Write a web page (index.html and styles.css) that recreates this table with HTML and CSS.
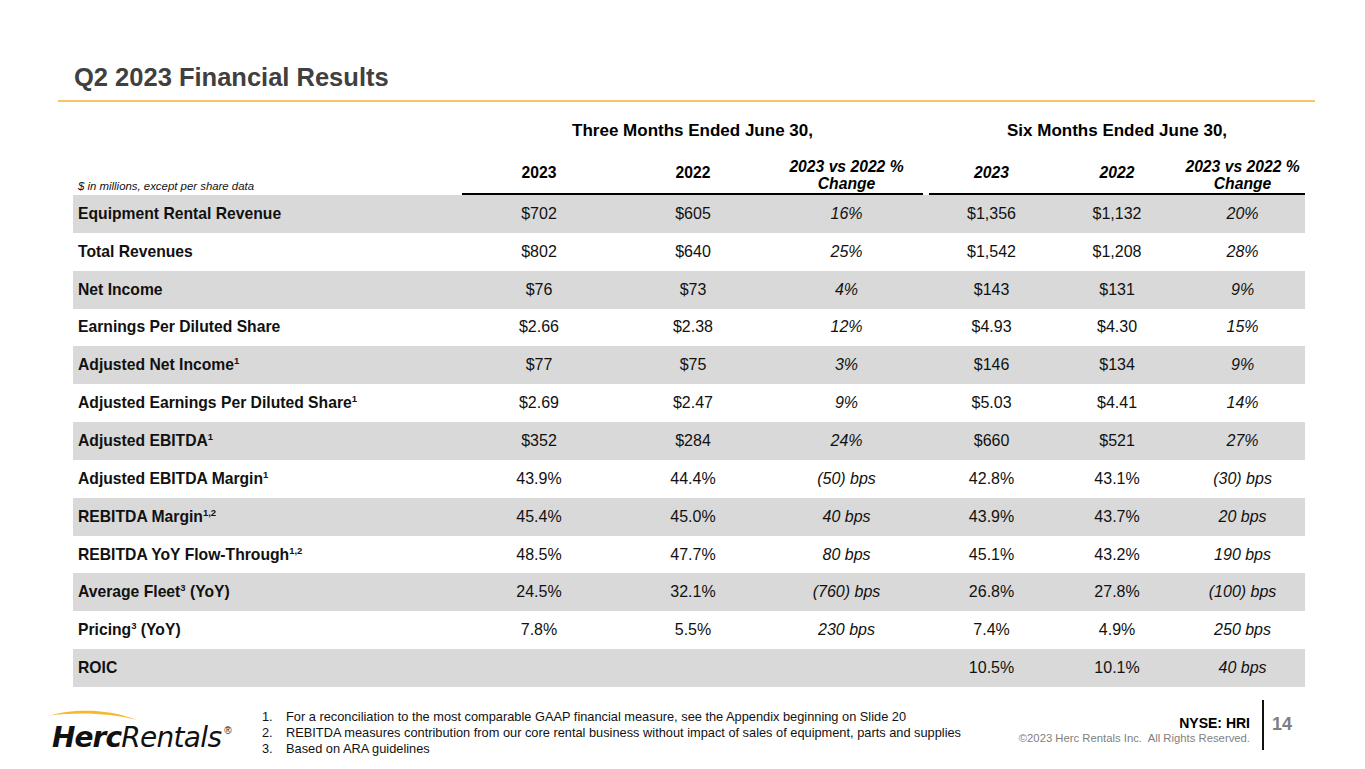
FILE: index.html
```html
<!DOCTYPE html>
<html>
<head>
<meta charset="utf-8">
<link rel="stylesheet" href="styles.css">
</head>
<body>
<div class="slide">
  <h1 class="title">Q2 2023 Financial Results</h1>
  <div class="rule"></div>
  <table class="fin">
    <colgroup>
      <col class="c-label"><col class="c-a"><col class="c-a"><col class="c-b"><col class="c-gap"><col class="c-s"><col class="c-s2"><col class="c-s">
    </colgroup>
    <tr class="grp">
      <th></th>
      <th colspan="3">Three Months Ended June 30,</th>
      <th></th>
      <th colspan="3">Six Months Ended June 30,</th>
    </tr>
    <tr class="sub">
      <th class="note">$ in millions, except per share data</th>
      <th class="u yr">2023</th>
      <th class="u yr">2022</th>
      <th class="u chg">2023 vs 2022 %<br>Change</th>
      <th class="gapc"></th>
      <th class="u yr it">2023</th>
      <th class="u yr it">2022</th>
      <th class="u chg">2023 vs 2022 %<br>Change</th>
    </tr>
    <tr class="g"><td>Equipment Rental Revenue</td><td>$702</td><td>$605</td><td class="i">16%</td><td></td><td>$1,356</td><td>$1,132</td><td class="i">20%</td></tr>
    <tr><td>Total Revenues</td><td>$802</td><td>$640</td><td class="i">25%</td><td></td><td>$1,542</td><td>$1,208</td><td class="i">28%</td></tr>
    <tr class="g"><td>Net Income</td><td>$76</td><td>$73</td><td class="i">4%</td><td></td><td>$143</td><td>$131</td><td class="i">9%</td></tr>
    <tr><td>Earnings Per Diluted Share</td><td>$2.66</td><td>$2.38</td><td class="i">12%</td><td></td><td>$4.93</td><td>$4.30</td><td class="i">15%</td></tr>
    <tr class="g"><td>Adjusted Net Income<sup>1</sup></td><td>$77</td><td>$75</td><td class="i">3%</td><td></td><td>$146</td><td>$134</td><td class="i">9%</td></tr>
    <tr><td>Adjusted Earnings Per Diluted Share<sup>1</sup></td><td>$2.69</td><td>$2.47</td><td class="i">9%</td><td></td><td>$5.03</td><td>$4.41</td><td class="i">14%</td></tr>
    <tr class="g"><td>Adjusted EBITDA<sup>1</sup></td><td>$352</td><td>$284</td><td class="i">24%</td><td></td><td>$660</td><td>$521</td><td class="i">27%</td></tr>
    <tr><td>Adjusted EBITDA Margin<sup>1</sup></td><td>43.9%</td><td>44.4%</td><td class="i">(50) bps</td><td></td><td>42.8%</td><td>43.1%</td><td class="i">(30) bps</td></tr>
    <tr class="g"><td>REBITDA Margin<sup>1,2</sup></td><td>45.4%</td><td>45.0%</td><td class="i">40 bps</td><td></td><td>43.9%</td><td>43.7%</td><td class="i">20 bps</td></tr>
    <tr><td>REBITDA YoY Flow-Through<sup>1,2</sup></td><td>48.5%</td><td>47.7%</td><td class="i">80 bps</td><td></td><td>45.1%</td><td>43.2%</td><td class="i">190 bps</td></tr>
    <tr class="g"><td>Average Fleet<sup>3</sup> (YoY)</td><td>24.5%</td><td>32.1%</td><td class="i">(760) bps</td><td></td><td>26.8%</td><td>27.8%</td><td class="i">(100) bps</td></tr>
    <tr><td>Pricing<sup>3</sup> (YoY)</td><td>7.8%</td><td>5.5%</td><td class="i">230 bps</td><td></td><td>7.4%</td><td>4.9%</td><td class="i">250 bps</td></tr>
    <tr class="g"><td>ROIC</td><td></td><td></td><td class="i"></td><td></td><td>10.5%</td><td>10.1%</td><td class="i">40 bps</td></tr>
  </table>

  <footer class="foot">
    <div class="logo">
      <svg class="swoosh" width="88" height="13" viewBox="0 0 88 13">
        <path d="M0 6.5 C 20 0.5, 55 -1.5, 87 11 C 60 4, 28 3, 0 6.5 Z" fill="#f5b82e"/>
      </svg>
      <span class="herc">Herc</span><span class="rentals">Rentals</span><span class="reg">®</span>
    </div>
    <ol class="notes">
      <li><span class="n">1.</span>For a reconciliation to the most comparable GAAP financial measure, see the Appendix beginning on Slide 20</li>
      <li><span class="n">2.</span>REBITDA measures contribution from our core rental business without impact of sales of equipment, parts and supplies</li>
      <li><span class="n">3.</span>Based on ARA guidelines</li>
    </ol>
    <div class="corp">
      <div class="ticker">NYSE: HRI</div>
      <div class="copy">©2023 Herc Rentals Inc.&nbsp; All Rights Reserved.</div>
    </div>
    <div class="divider"></div>
    <div class="page">14</div>
  </footer>
</div>
</body>
</html>
```

FILE: styles.css
```css
html, body {
  margin: 0;
  padding: 0;
  background: #ffffff;
}
body {
  font-family: "Liberation Sans", Arial, sans-serif;
  color: #000;
}
.slide {
  width: 1365px;
  height: 769px;
  overflow: hidden;
  box-sizing: border-box;
  padding-top: 62px;
}
.title {
  margin: 0 0 0 74px;
  font-size: 25.5px;
  line-height: 30px;
  font-weight: bold;
  color: #404040;
}
.rule {
  margin: 8px 50px 0 58px;
  height: 2px;
  background: #f5c662;
}
.fin {
  margin: 8px 0 0 73px;
  width: 1232px;
  border-collapse: separate;
  border-spacing: 0;
  table-layout: fixed;
  font-size: 16px;
}
.c-label { width: 389px; }
.c-a { width: 154px; }
.c-b { width: 153px; }
.c-gap { width: 6px; }
.c-s { width: 125px; }
.c-s2 { width: 126px; }

.fin th, .fin td {
  padding: 0;
  text-align: center;
}
.grp th {
  height: 41px;
  font-size: 17px;
  font-weight: bold;
  vertical-align: middle;
}
.sub th {
  vertical-align: bottom;
  font-size: 15.7px;
  font-weight: bold;
}
.sub th.u {
  border-bottom: 2px solid #000;
}
.sub th.yr {
  height: 31px;
  padding-bottom: 11px;
}
.sub th.it { font-style: italic; }
.sub th.chg {
  height: 41px;
  font-style: italic;
  line-height: 17px;
  padding-bottom: 1px;
}
.sub th.note {
  height: 41px;
  text-align: left;
  font-size: 11.4px;
  font-weight: normal;
  font-style: italic;
  padding: 0 0 3px 5px;
  color: #111;
}
.fin td {
  height: 37.85px;
  vertical-align: middle;
  color: #111;
}
.fin td:first-child {
  text-align: left;
  padding-left: 5px;
  font-weight: bold;
  font-size: 15.7px;
}
.fin td.i { font-style: italic; }
.fin tr.g td { background: #d9d9d9; }
.fin sup {
  font-size: 9.5px;
  line-height: 0;
  vertical-align: 6px;
}

.foot {
  display: flex;
  align-items: flex-start;
  margin-top: 12px;
  height: 60px;
}
.logo {
  position: relative;
  margin-left: 52px;
  width: 210px;
  flex: none;
  padding-top: 17px;
  font-family: "DejaVu Sans", "Open Sans", sans-serif;
  font-style: italic;
  font-size: 28px;
  line-height: 30px;
  white-space: nowrap;
  color: #111;
}
.swoosh {
  position: absolute;
  left: -2px;
  top: 10px;
}
.herc {
  font-weight: bold;
  letter-spacing: -0.9px;
}
.rentals {
  font-weight: normal;
  letter-spacing: -0.7px;
}
.reg {
  font-family: "Liberation Sans", Arial, sans-serif;
  font-style: normal;
  font-size: 10px;
  vertical-align: 13px;
  margin-left: 3px;
}
.notes {
  list-style: none;
  margin: 10px 0 0 0;
  padding: 0;
  font-size: 12.8px;
  line-height: 16px;
  color: #111;
}
.notes li {
  display: flex;
}
.notes .n {
  width: 24px;
  flex: none;
}
.corp {
  margin-left: auto;
  text-align: right;
  padding-top: 17px;
}
.ticker {
  font-size: 14px;
  font-weight: bold;
  line-height: 15px;
  color: #000;
}
.copy {
  font-size: 11.3px;
  line-height: 15px;
  color: #7f7f7f;
}
.divider {
  width: 2px;
  height: 50px;
  background: #111;
  margin: 1px 0 0 12px;
}
.page {
  width: 101px;
  box-sizing: border-box;
  padding: 15px 0 0 8px;
  font-size: 18px;
  line-height: 20px;
  font-weight: bold;
  color: #7f7f7f;
}
```
